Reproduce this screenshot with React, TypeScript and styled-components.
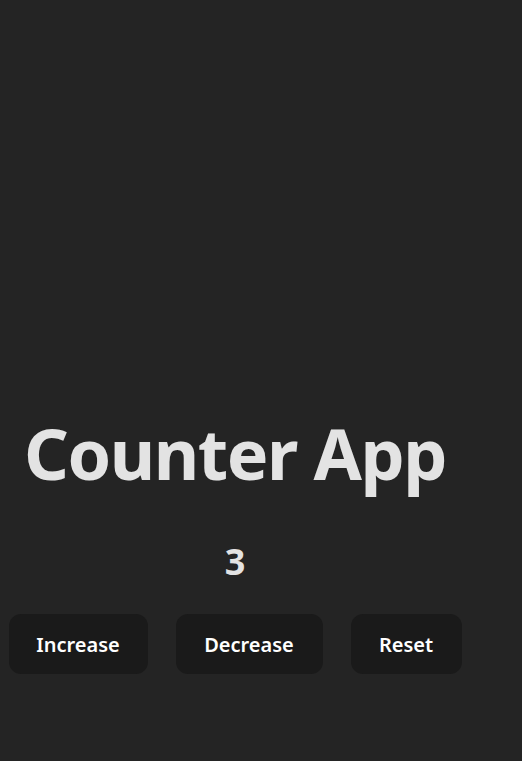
import React, { useState } from "react";
import styled, { createGlobalStyle } from "styled-components";

const Global = createGlobalStyle`
  html, body { margin: 0; padding: 0; background: #242424; }
  body { font-family: "Noto Sans", "Open Sans", sans-serif; color: rgba(255,255,255,0.87); }
`;

const Page = styled.div`
  min-height: 100vh;
  box-sizing: border-box;
  padding-top: 414px;
  display: flex;
  justify-content: flex-start;
`;

const Column = styled.div`
  width: 470px;
  display: flex;
  flex-direction: column;
  align-items: center;
  text-align: center;
`;

const Title = styled.h1`
  margin: 0;
  font-size: 70px;
  line-height: 79px;
  font-weight: 700;
  letter-spacing: -1.5px;
  color: #e3e3e3;
  white-space: nowrap;
`;

const Count = styled.div`
  margin-top: 47px;
  font-size: 36px;
  line-height: 43px;
  font-weight: 700;
  color: #e3e3e3;
`;

const Row = styled.div`
  margin-top: 31px;
  display: flex;
  justify-content: center;
  gap: 28px;
  width: 470px;
`;

const Button = styled.button<{ $w: number }>`
  width: ${(p) => p.$w}px;
  height: 60px;
  border: none;
  border-radius: 12px;
  background: #1a1a1a;
  color: #ffffff;
  font-family: "Noto Sans", "Open Sans", sans-serif;
  font-size: 20px;
  font-weight: 600;
  cursor: pointer;
  padding: 0;
  flex: none;
`;

export default function App() {
  const [count, setCount] = useState(3);
  return (
    <>
      <Global />
      <Page>
        <Column>
          <Title>Counter App</Title>
          <Count>{count}</Count>
          <Row>
            <Button $w={139} onClick={() => setCount(count + 1)}>Increase</Button>
            <Button $w={147} onClick={() => setCount(count - 1)}>Decrease</Button>
            <Button $w={111} onClick={() => setCount(0)}>Reset</Button>
          </Row>
        </Column>
      </Page>
    </>
  );
}
